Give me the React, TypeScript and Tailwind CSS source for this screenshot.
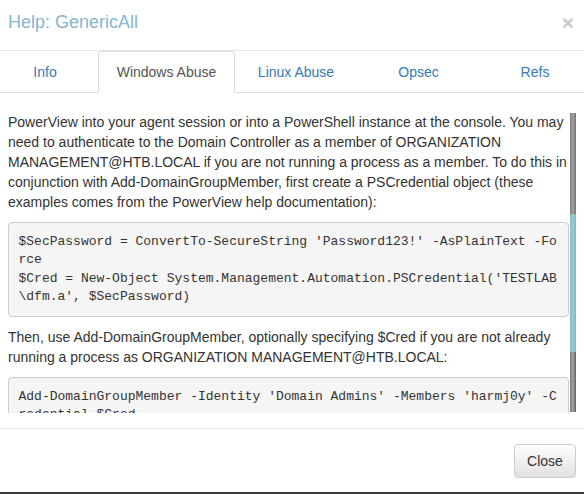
const TABS: { label: string; w: string; active?: boolean }[] = [
  { label: "Info", w: "w-[98px] pr-[8px]" },
  { label: "Windows Abuse", w: "w-[137px]", active: true },
  { label: "Linux Abuse", w: "w-[122px]" },
  { label: "Opsec", w: "w-[123px]" },
  { label: "Refs", w: "w-[104px] pl-[6px]" },
];

const CODE_1 = [
  "$SecPassword = ConvertTo-SecureString 'Password123!' -AsPlainText -Fo",
  "rce",
  "$Cred = New-Object System.Management.Automation.PSCredential('TESTLAB",
  "\\dfm.a', $SecPassword)",
];

const CODE_2 = [
  "Add-DomainGroupMember -Identity 'Domain Admins' -Members 'harmj0y' -C",
  "redential $Cred",
];

function Pre({ lines }: { lines: string[] }) {
  return (
    <pre className="mb-[10px] rounded-[4px] border border-[#cccccc] bg-[#f5f5f5] p-[9.5px] font-['Liberation_Mono',monospace] text-[13px] leading-[18.57px] text-[#333333] whitespace-pre">
      {lines.join("\n")}
    </pre>
  );
}

export default function App() {
  return (
    <div className="flex h-[494px] w-[584px] flex-col overflow-hidden bg-white font-['Liberation_Sans',Arial,sans-serif] text-[14px] leading-[20px] text-[#333333]">
      {/* Header */}
      <div className="flex h-[51px] shrink-0 items-center justify-between border-b border-[#e5e5e5] pl-[8px] pr-[10px] pb-[6px]">
        <h4 className="text-[18px] leading-[20px] text-[#86b6d2]">Help: GenericAll</h4>
        <span className="text-[21px] font-bold leading-none text-[#c8c8c8]">×</span>
      </div>

      {/* Tabs */}
      <div className="flex h-[42px] shrink-0 border-b border-[#dddddd]">
        {TABS.map((t) => (
          <div
            key={t.label}
            className={`${t.w} -mb-px flex h-[42px] items-center justify-center rounded-t-[4px] border ${
              t.active ? "border-[#dddddd] border-b-white bg-white text-[#555555]" : "border-transparent text-[#337ab7]"
            }`}
          >
            {t.label}
          </div>
        ))}
      </div>

      {/* Body */}
      <div className="shrink-0 pl-[8px] pr-[8px] pt-[20px] pb-[15px]">
        <div className="relative h-[300px] overflow-hidden">
          <div className="-mt-px pr-[7px]">
            <p className="mb-[10px]">
              PowerView into your agent session or into a PowerShell instance at the console. You may need to
              authenticate to the Domain Controller as a member of ORGANIZATION MANAGEMENT@HTB.LOCAL if you are not
              running a process as a member. To do this in conjunction with Add-DomainGroupMember, first create a
              PSCredential object (these examples comes from the PowerView help documentation):
            </p>
            <Pre lines={CODE_1} />
            <p className="mb-[10px]">
              Then, use Add-DomainGroupMember, optionally specifying $Cred if you are not already running a process as
              ORGANIZATION MANAGEMENT@HTB.LOCAL:
            </p>
            <Pre lines={CODE_2} />
          </div>
          {/* scrollbar */}
          <div className="absolute right-0 top-0 flex h-[299px] w-[6px] flex-col">
            <div className="h-[101px] bg-gradient-to-r from-[#7c7c7e] via-[#a4a4a6] to-[#707072]" />
            <div className="h-[138px] bg-gradient-to-r from-[#86bcc0] via-[#9acdd0] to-[#80b5b9]" />
            <div className="flex-1 bg-gradient-to-r from-[#7c7c7e] via-[#a4a4a6] to-[#5e5e60]" />
          </div>
        </div>
      </div>

      {/* Footer */}
      <div className="flex flex-1 items-start justify-end border-t border-[#e5e5e5] pr-[8px] pt-[15px]">
        <button className="h-[34px] w-[62px] rounded-[4px] border border-[#cccccc] bg-gradient-to-b from-white to-[#e0e0e0] text-[14px] text-[#333333] shadow-[0_1px_0_rgba(255,255,255,0.15)]">
          Close
        </button>
      </div>
      <div className="h-[2px] shrink-0 bg-[#3a3a3a]" />
    </div>
  );
}
